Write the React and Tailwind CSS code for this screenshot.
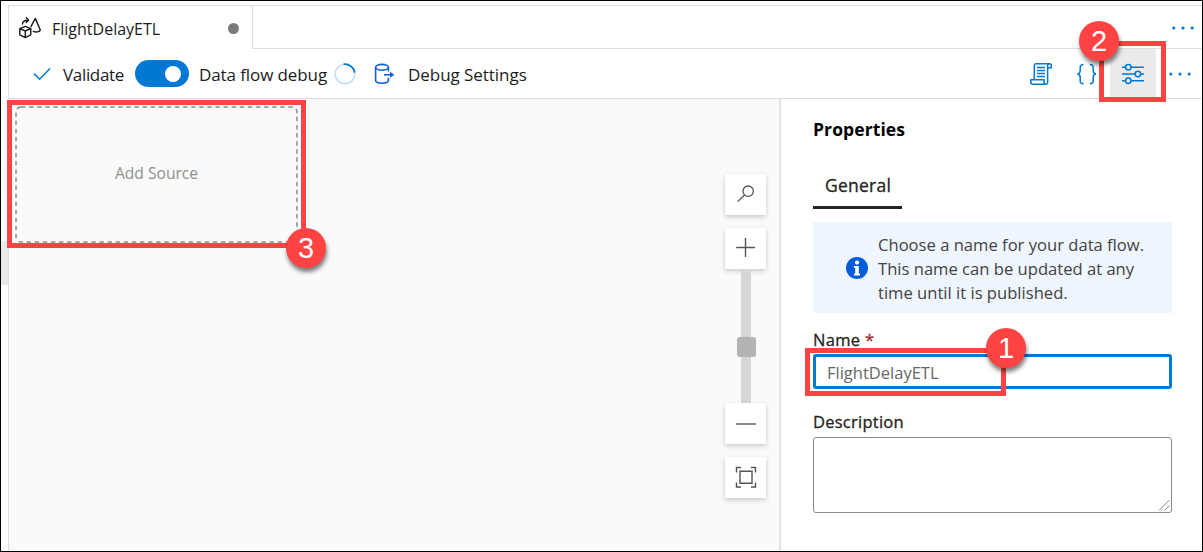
import React from "react";

const FONT = "font-['Open_Sans','Noto_Sans',sans-serif]";

function FlowIcon() {
  return (
    <svg className="h-6 w-6 shrink-0" viewBox="0 0 24 24" fill="none" stroke="#1b1b1b" strokeWidth="1.4" strokeLinejoin="round" strokeLinecap="round">
      <path d="M1.8 12.6 7.3 10.4 12.8 12.6V18.8L7.3 21.6 1.8 18.8ZM1.8 12.6 7.3 15 12.8 12.6M7.3 15V21.6" />
      <path d="M15.3 15.4C18 16.6 21.9 16 22.3 14L17.3 2.4 13 10.6" />
      <path d="M4.4 8C4.6 5.2 6 4.2 10.3 4.2M8.2 1.7 10.6 4.2 8.2 6.6" />
    </svg>
  );
}

function DebugSettingsIcon() {
  return (
    <svg className="h-6 w-6 shrink-0" viewBox="0 0 24 24" fill="none" stroke="#0f5fd8" strokeWidth="1.6">
      <ellipse cx="9" cy="5.3" rx="6.4" ry="2.9" />
      <path d="M2.6 5.3V18.3C2.6 20.2 5.6 21.2 9 21.2 12.4 21.2 15.4 20.2 15.4 18.3V15.8M15.4 5.3V9.5" />
      <path d="M11 12.8H19" />
      <path d="M17 9.8 21.4 12.8 17 15.8Z" fill="#0f5fd8" stroke="none" />
    </svg>
  );
}

function ScriptIcon() {
  return (
    <svg className="h-6 w-6 shrink-0" viewBox="0 0 24 24" fill="none" stroke="#0078d4" strokeWidth="1.5" strokeLinejoin="round">
      <path d="M5.3 17.6V3.8C5.3 2.6 6 1.8 7 1.8H20.6C21.7 1.8 22.3 2.6 22.3 3.6V5.8H18.6V20.2C18.6 21.6 17.8 22.2 16.8 22.2H4C2.6 22.2 1.8 21.2 1.8 20V17.8H15V20C15 21.4 15.8 22.2 16.8 22.2" />
      <path d="M20.6 1.8C19.2 1.8 18.6 2.6 18.6 3.8V5.8M8 5.6H16M8 8.6H16M8 11.6H16M8 14.6H16" />
    </svg>
  );
}

function BracesIcon() {
  return (
    <svg className="h-6 w-6 shrink-0" viewBox="0 0 24 24" fill="none" stroke="#0078d4" strokeWidth="1.5">
      <path d="M8.6 2.4C6.2 2.4 5.2 3.2 5.2 5.4V8.6C5.2 10.8 4.4 11.9 2.4 12 4.4 12.1 5.2 13.2 5.2 15.4V18.8C5.2 21 6.2 21.8 8.6 21.8" />
      <path d="M14.8 2.4C17.2 2.4 18.2 3.2 18.2 5.4V8.6C18.2 10.8 19 11.9 21 12 19 12.1 18.2 13.2 18.2 15.4V18.8C18.2 21 17.2 21.8 14.8 21.8" />
    </svg>
  );
}

function SlidersIcon() {
  return (
    <svg className="h-6 w-6 shrink-0" viewBox="0 0 24 24" fill="none" stroke="#0078d4" strokeWidth="1.5">
      <path d="M1 5.2H4.6M10 5.2H23M1 12H14.2M19.6 12H23M1 18.8H4.6M10 18.8H23" />
      <circle cx="7.3" cy="5.2" r="2.7" />
      <circle cx="16.9" cy="12" r="2.7" />
      <circle cx="7.3" cy="18.8" r="2.7" />
    </svg>
  );
}

function Ellipsis({ className = "" }) {
  return (
    <svg className={"h-1 w-[22px] shrink-0 " + className} viewBox="0 0 22 4" fill="#0078d4">
      <circle cx="1.8" cy="2" r="1.6" />
      <circle cx="11" cy="2" r="1.6" />
      <circle cx="20.2" cy="2" r="1.6" />
    </svg>
  );
}

function ZoomButton({ children }) {
  return (
    <button className="flex h-[41px] w-[41px] shrink-0 items-center justify-center bg-white shadow-[0_2px_5px_rgba(0,0,0,0.2)]">
      <svg className="h-6 w-6" viewBox="0 0 24 24" fill="none" stroke="#555555" strokeWidth="1.3">
        {children}
      </svg>
    </button>
  );
}

function Badge({ n, className }) {
  return (
    <div className={"absolute flex h-10 w-10 items-center justify-center rounded-full bg-[#ff4343] font-['Liberation_Sans',Arial,sans-serif] text-[29px] leading-none text-white shadow-[1px_4px_4px_rgba(0,0,0,0.5)] " + className}>
      {n}
    </div>
  );
}

function TabBar() {
  return (
    <div className="flex h-[44px] shrink-0 border-t-[1px] border-[#dedede]">
      <div className="flex w-[244px] shrink-0 items-center border-r border-[#dedede] pl-[9px] pr-[13px] pt-[1px]">
        <FlowIcon />
        <span className="ml-[10px] pt-[2px] text-[16px] text-[#1b1b1b]">FlightDelayETL</span>
        <span className="ml-auto h-[11px] w-[11px] rounded-full bg-[#7a7a7a]" />
      </div>
      <div className="flex flex-1 items-center justify-end border-b border-[#dedede] pr-2">
        <Ellipsis className="mt-[2px]" />
      </div>
    </div>
  );
}

function Toolbar() {
  return (
    <div className="flex h-[50px] shrink-0 items-center border-b border-[#dedede] pl-[24px] text-[17px] text-[#1b1b1b]">
      <svg className="h-[14px] w-[18px] shrink-0" viewBox="0 0 18 14" fill="none" stroke="#0078d4" strokeWidth="1.5">
        <path d="M1 6.6 6.6 12.2 17 1.4" />
      </svg>
      <span className="ml-[12px] w-[72px] pt-[3px] tracking-[-0.33px]">Validate</span>
      <span className="flex h-[27px] w-[54px] shrink-0 items-center justify-end rounded-full bg-[#0078d4] pr-[8px]">
        <span className="h-4 w-4 rounded-full bg-white" />
      </span>
      <span className="ml-[10px] w-[134px] pt-[3px] tracking-[-0.1px]">Data flow debug</span>
      <svg className="h-6 w-6 shrink-0" viewBox="0 0 24 24" fill="none" strokeWidth="1.6">
        <circle cx="12" cy="12" r="9.8" stroke="#c3dff5" />
        <path d="M10.5 2.3A9.8 9.8 0 0 1 21.7 10.6" stroke="#0078d4" />
      </svg>
      <span className="ml-[16px] flex">
        <DebugSettingsIcon />
      </span>
      <span className="ml-[11px] pt-[3px] tracking-[-0.05px]">Debug Settings</span>
      <div className="ml-auto flex h-full items-center pr-[11px]">
        <ScriptIcon />
        <span className="ml-[22px] mr-[11px] flex"><BracesIcon /></span>
        <span className="flex h-full w-[46px] items-center justify-center bg-[#eaeaea]"><SlidersIcon /></span>
        <Ellipsis className="ml-[13px]" />
      </div>
    </div>
  );
}

function Canvas() {
  return (
    <div className="flex w-[770px] shrink-0 justify-between bg-[#fafafa] pr-[13px]">
      <div className="h-[148px] w-[296px] bg-white pl-[6px] pt-[7px]">
        <div className="flex h-[137px] w-[283px] items-center justify-center bg-[#fafafa]">
          <svg className="absolute h-[137px] w-[283px]" viewBox="0 0 283 137" fill="none">
            <rect x="1" y="1" width="281" height="135" rx="5" stroke="#8a8a8a" strokeWidth="1.5" strokeDasharray="4.5 3.6" />
          </svg>
          <span className="pb-px text-[15.6px] text-[#8f8f8f]">Add Source</span>
        </div>
      </div>
      <div className="flex flex-col items-center pt-[75px]">
        <ZoomButton>
          <circle cx="14.2" cy="8.2" r="5.2" />
          <path d="M10.5 12 3.6 18.6" />
        </ZoomButton>
        <div className="h-[13px]" />
        <ZoomButton>
          <path d="M2.2 10.5H21M11.5 1V20" strokeWidth="1.4" />
        </ZoomButton>
        <div className="flex h-[134px] w-[10px] items-center justify-center bg-[#d6d6d6]">
          <span className="ml-px mt-[22px] h-5 w-[19px] shrink-0 rounded-[3px] bg-[#b3b3b3]" />
        </div>
        <ZoomButton>
          <path d="M2 12H22" strokeWidth="1.4" />
        </ZoomButton>
        <div className="h-[13px]" />
        <ZoomButton>
          <path d="M2.5 6.5V1.5H7M17 1.5H21.5V6.5M21.5 16.5V21H17M7 21H2.5V16.5M6 5.3H18V17.3H6Z" strokeWidth="1.4" />
        </ZoomButton>
      </div>
    </div>
  );
}

function Properties() {
  return (
    <div className="flex flex-1 flex-col border-l-2 border-[#e4e4e4] pl-[32px] pr-[30px] text-[#242424]">
      <h2 className="mt-[18px] text-[17.5px] leading-6 font-bold tracking-[0.1px] text-black">Properties</h2>
      <div className="mt-[32px] h-[36px] w-[89px] border-b-[3px] border-[#242424] pl-[12px] text-[17.5px] leading-6 tracking-[0.25px] [-webkit-text-stroke:0.3px]">General</div>
      <div className="mt-[13px] flex h-[91px] items-center bg-[#eff6ff] pl-[33px]">
        <svg className="h-[22px] w-[22px] shrink-0" viewBox="0 0 22 22">
          <circle cx="11" cy="11" r="11" fill="#015cda" />
          <circle cx="11" cy="5.6" r="2.1" fill="#fff" />
          <path d="M8 9H12.8V16.4H14V18.4H8V16.4H9.2V11H8Z" fill="#fff" />
        </svg>
        <p className="ml-[10px] pt-[2px] text-[16.6px] leading-6 whitespace-nowrap text-[#424242]">
          Choose a name for your data flow.<br />This name can be updated at any<br />time until it is published.
        </p>
      </div>
      <label className="mt-[15px] text-[16.5px] leading-6 tracking-[0.3px] [-webkit-text-stroke:0.3px]">Name <span className="text-[#a4262c]">*</span></label>
      <div className="mt-[2px] flex h-[35px] shrink-0 items-center rounded-[3px] border-[3px] border-[#0078d4] pl-[11px] pt-[3px] text-[16.5px] text-[#666666]">FlightDelayETL</div>
      <label className="mt-[21px] text-[16.5px] leading-6 tracking-[0.25px] [-webkit-text-stroke:0.3px]">Description</label>
      <div className="mt-[3px] flex h-[76px] shrink-0 items-end justify-end rounded-[3px] border border-[#8a8a8a] p-[1px]">
        <svg className="h-3 w-3" viewBox="0 0 12 12" stroke="#8a8a8a" strokeWidth="1"><path d="M1 11.5 11.5 1M6.5 11.5 11.5 6.5" /></svg>
      </div>
    </div>
  );
}

export default function App() {
  return (
    <div className={"relative flex h-[552px] w-[1203px] overflow-hidden border border-black bg-white whitespace-nowrap " + FONT}>
      <div className="flex w-[7px] shrink-0 flex-col pt-[240px]">
        <div className="h-[44px] bg-[#eceae8]" />
      </div>
      <div className="mt-[4px] flex min-w-0 flex-1 flex-col border-l border-[#dedede]">
        <TabBar />
        <Toolbar />
        <div className="flex min-h-0 flex-1">
          <Canvas />
          <Properties />
        </div>
      </div>
      <div className="absolute left-[6px] top-[99px] h-[148px] w-[299px] border-[5px] border-[#ff4343]" />
      <div className="absolute left-[1098px] top-[40px] h-[61px] w-[67px] border-[5px] border-[#ff4343]" />
      <div className="absolute left-[804px] top-[347px] h-[48px] w-[201px] border-[5px] border-[#ff4343]" />
      <Badge n="3" className="left-[285px] top-[227px]" />
      <Badge n="2" className="left-[1078px] top-[20px]" />
      <Badge n="1" className="left-[985px] top-[327px]" />
    </div>
  );
}
